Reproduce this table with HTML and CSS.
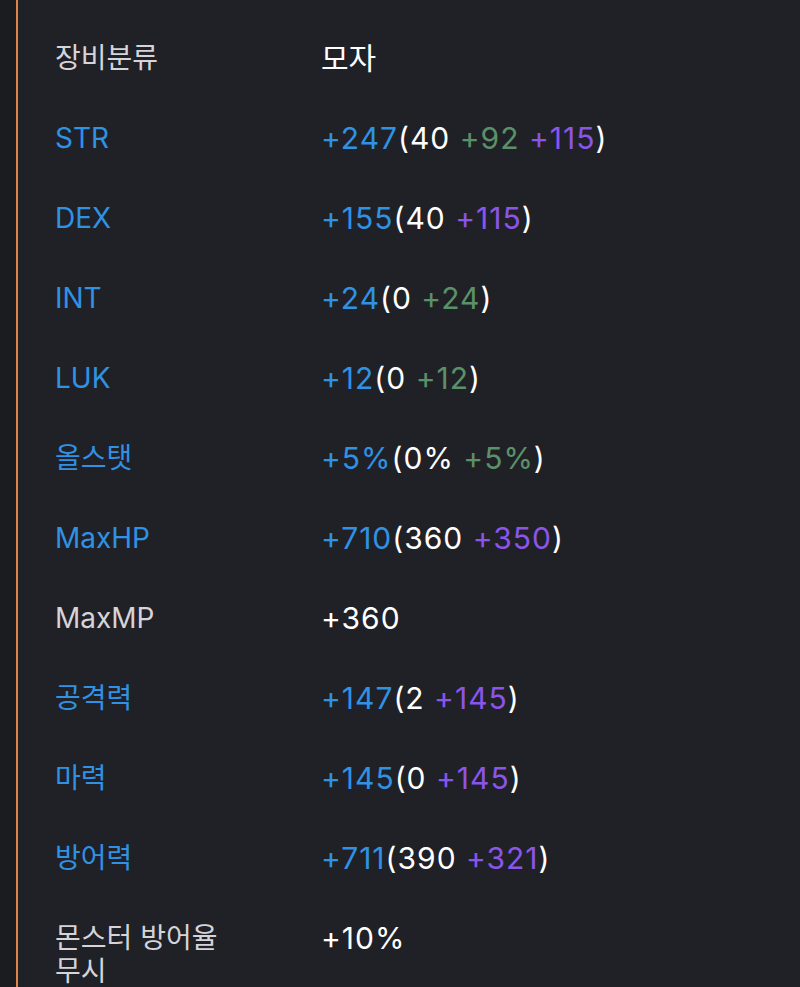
FILE: index.html
```html
<!DOCTYPE html>
<html lang="ko">
<head>
<meta charset="utf-8">
<title>장비 정보</title>
<link rel="stylesheet" href="styles.css">
</head>
<body>
<div class="panel">
  <table class="stats">
    <colgroup><col class="col-label"><col class="col-value"></colgroup>
    <tr><td class="label">장비분류</td><td class="value white">모자</td></tr>
    <tr><td class="label blue">STR</td><td class="value"><span class="blue">+247</span>(40 <span class="green">+92</span> <span class="purple">+115</span>)</td></tr>
    <tr><td class="label blue">DEX</td><td class="value"><span class="blue">+155</span>(40 <span class="purple">+115</span>)</td></tr>
    <tr><td class="label blue">INT</td><td class="value"><span class="blue">+24</span>(0 <span class="green">+24</span>)</td></tr>
    <tr><td class="label blue">LUK</td><td class="value"><span class="blue">+12</span>(0 <span class="green">+12</span>)</td></tr>
    <tr><td class="label blue">올스탯</td><td class="value"><span class="blue">+5%</span>(0% <span class="green">+5%</span>)</td></tr>
    <tr><td class="label blue">MaxHP</td><td class="value"><span class="blue">+710</span>(360 <span class="purple">+350</span>)</td></tr>
    <tr><td class="label">MaxMP</td><td class="value">+360</td></tr>
    <tr><td class="label blue">공격력</td><td class="value"><span class="blue">+147</span>(2 <span class="purple">+145</span>)</td></tr>
    <tr><td class="label blue">마력</td><td class="value"><span class="blue">+145</span>(0 <span class="purple">+145</span>)</td></tr>
    <tr><td class="label blue">방어력</td><td class="value"><span class="blue">+711</span>(390 <span class="purple">+321</span>)</td></tr>
    <tr><td class="label">몬스터 방어율 무시</td><td class="value">+10%</td></tr>
  </table>
</div>
</body>
</html>
```

FILE: styles.css
```css
html, body {
  margin: 0;
  padding: 0;
  background: #1b1c20;
  height: 100%;
}
body {
  padding-left: 16px;
  font-family: Inter, "Noto Sans CJK KR", "Noto Sans", sans-serif;
  font-size: 28px;
  line-height: 33px;
  color: #ffffff;
  overflow: hidden;
}
.panel {
  min-height: 100%;
  background: #202127;
  border-left: 2px solid #e0844a;
  padding: 24px 0 0 37px;
  box-sizing: border-box;
}
.stats {
  border-collapse: collapse;
  table-layout: fixed;
  width: 700px;
}
.col-label {
  width: 266px;
}
.stats td {
  padding: 18px 0 29px;
  vertical-align: top;
  line-height: 33px;
}
.stats td.label {
  padding-right: 76px;
  color: #d4d4d9;
  font-weight: 400;
}
.value {
  font-size: 30px;
  letter-spacing: 1px;
  font-weight: 400;
  color: #ffffff;
  white-space: nowrap;
}
.value.white {
  letter-spacing: 0;
}
.blue { color: #2f92e4; }
.stats td.label.blue { color: #2f92e4; }
.green { color: #5b9168; }
.purple { color: #8b55ea; }
```
